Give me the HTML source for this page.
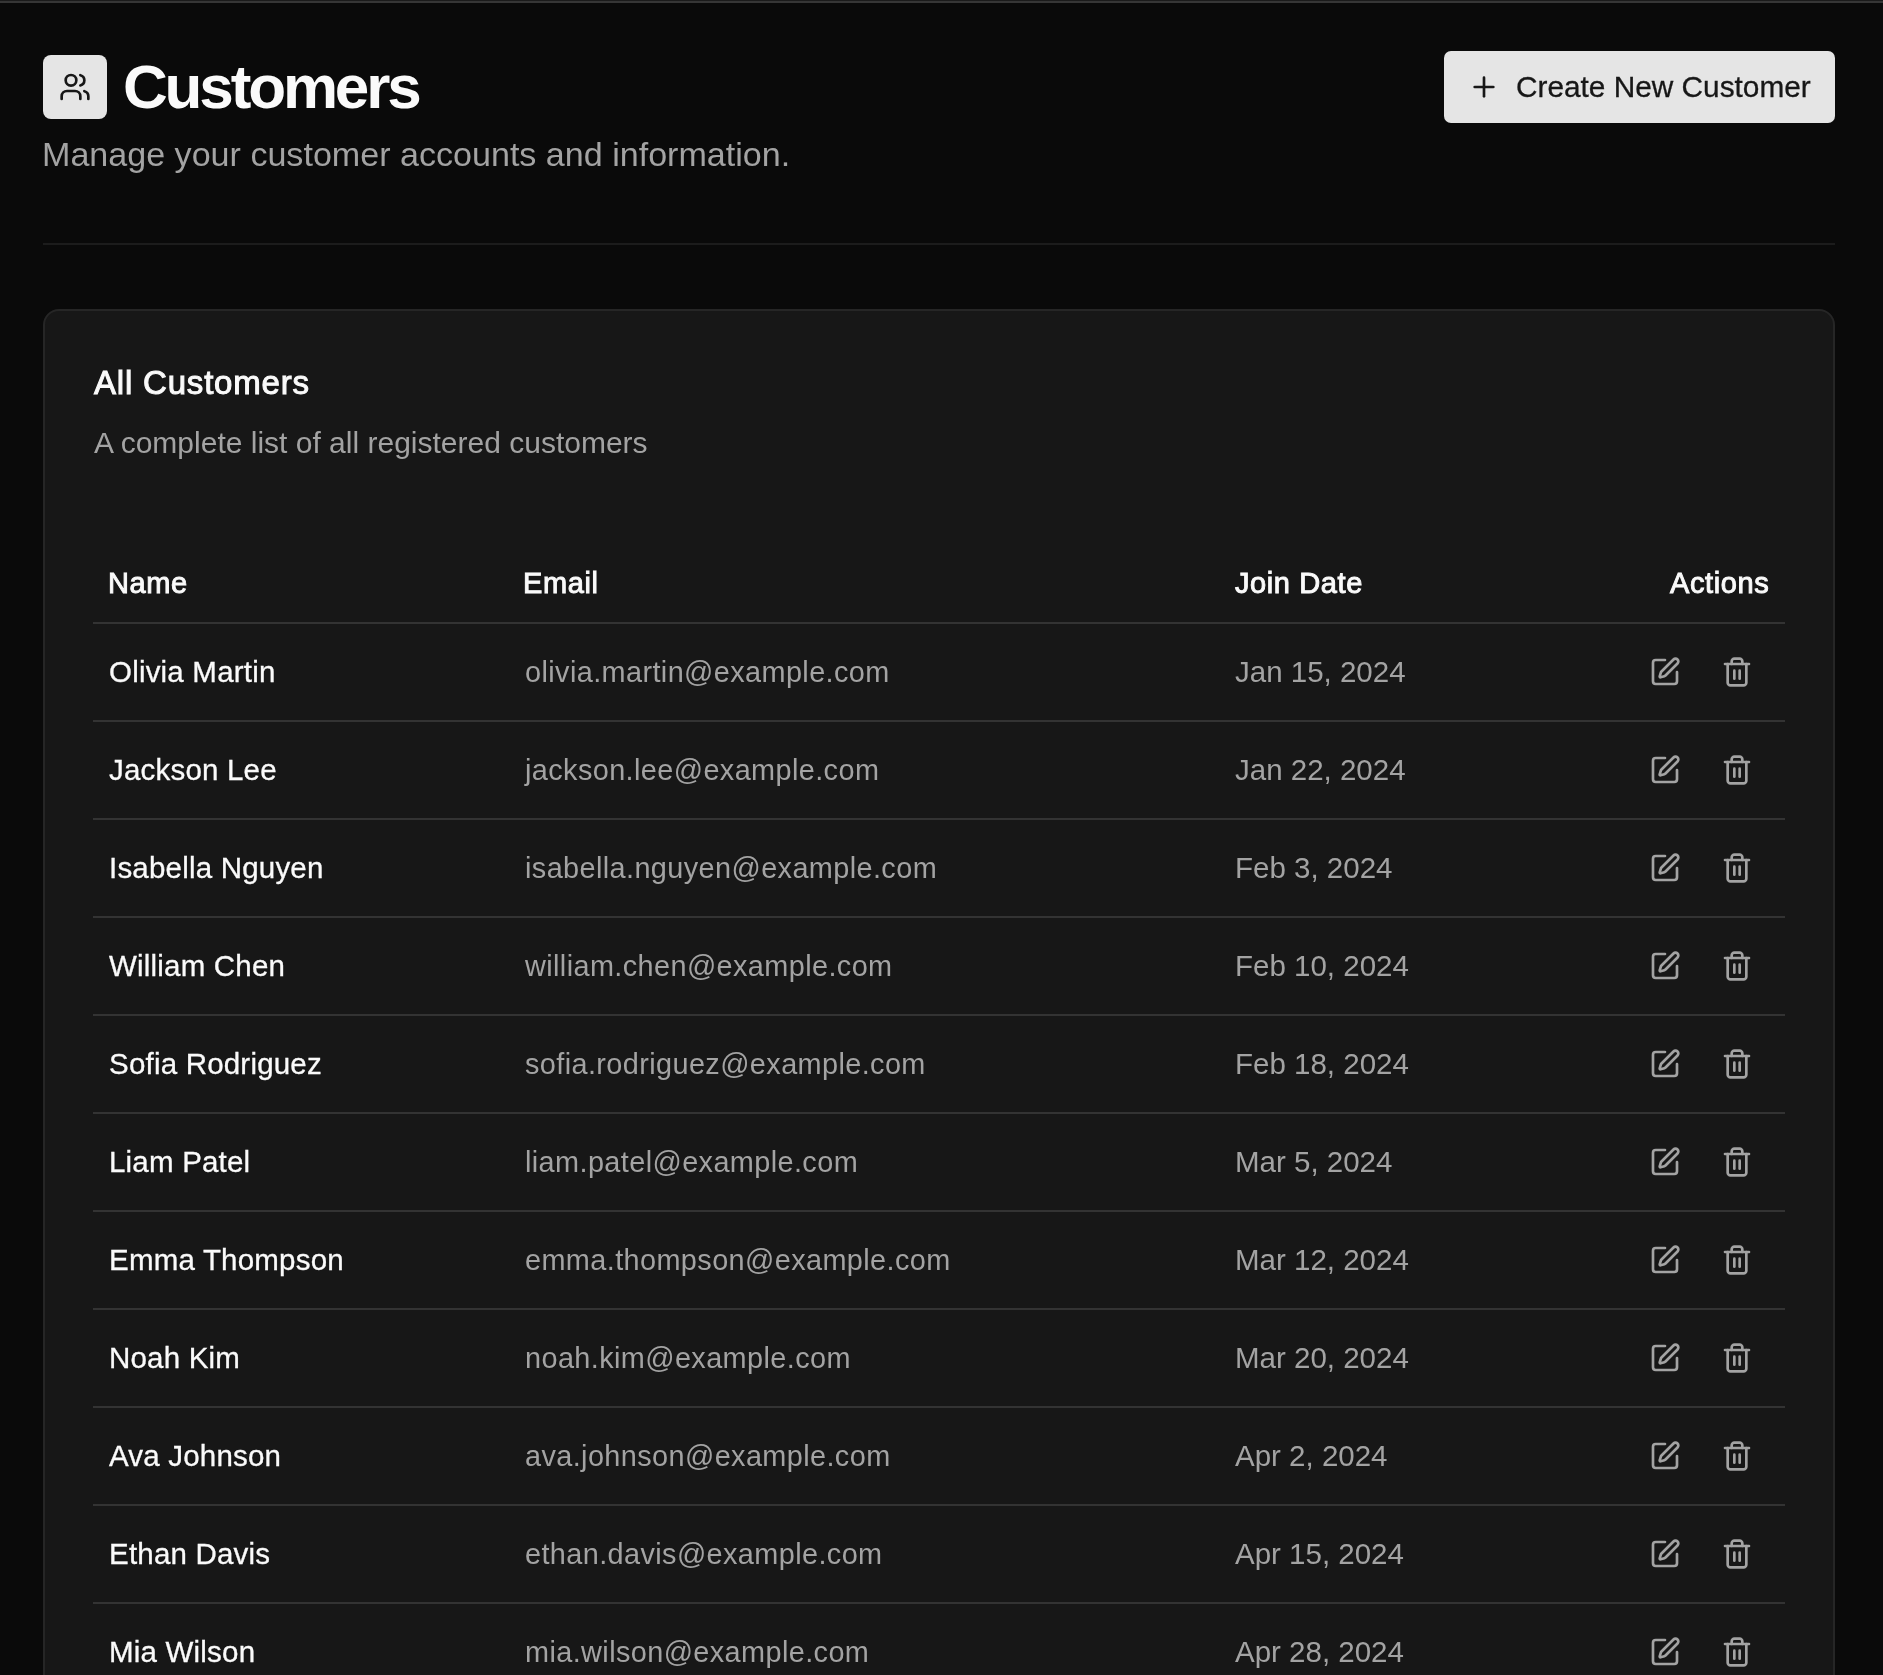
<!DOCTYPE html>
<html>
<head>
<meta charset="utf-8">
<title>Customers</title>
<style>
html,body{margin:0;padding:0;}
body{width:1883px;height:1675px;overflow:hidden;background:#0a0a0a;position:relative;font-family:"Liberation Sans",sans-serif;}
.topbar{position:absolute;left:0;top:0;width:1883px;height:3px;background:#363636;border-top:1px solid #1b1b1b;box-sizing:border-box;}
.t{position:absolute;white-space:nowrap;will-change:transform;}
.iconbox{position:absolute;left:43px;top:55px;width:64px;height:64px;background:#e5e5e5;border-radius:8px;}
.iconbox svg{position:absolute;left:16px;top:16px;}
.title{left:122.5px;top:56px;font-size:62px;line-height:62px;font-weight:700;color:#fafafa;letter-spacing:-3.15px;}
.sub{left:42px;top:137px;font-size:34.1px;line-height:34.1px;color:#a3a3a3;}
.btn{position:absolute;left:1444px;top:51px;width:391px;height:72px;background:#e5e5e5;border-radius:7px;}
.btntext{left:1516px;top:72px;font-size:29.8px;line-height:29.8px;color:#171717;-webkit-text-stroke:0.3px #171717;}
.sep{position:absolute;left:43px;top:243px;width:1792px;height:2px;background:#1c1c1c;}
.card{position:absolute;left:43px;top:309px;width:1792px;height:1500px;box-sizing:border-box;background:#171717;border:2px solid #262626;border-radius:16px;}
.ctitle{left:94px;top:365.5px;font-size:33px;line-height:33px;font-weight:400;-webkit-text-stroke:1.0px #fafafa;color:#fafafa;letter-spacing:0.8px;}
.cdesc{left:94px;top:427.5px;font-size:30px;line-height:30px;color:#a3a3a3;}
.th{font-size:29px;line-height:29px;font-weight:400;letter-spacing:0.6px;-webkit-text-stroke:0.95px #fafafa;color:#fafafa;top:568.5px;}
.dv{position:absolute;left:93px;width:1692px;height:2px;background:#333333;}
.nm{left:109px;font-size:29.5px;line-height:29.5px;letter-spacing:0.2px;color:#fafafa;-webkit-text-stroke:0.3px #fafafa;}
.em{left:525px;font-size:28.85px;line-height:28.85px;letter-spacing:0.4px;color:#a3a3a3;}
.dt{left:1235px;font-size:29.5px;line-height:29.5px;letter-spacing:0px;color:#a3a3a3;}
.ic{position:absolute;fill:none;stroke:#a3a3a3;stroke-width:2;stroke-linecap:round;stroke-linejoin:round;}
</style>
</head>
<body>
<div class="topbar"></div>
<div class="iconbox"><svg width="32" height="32" viewBox="0 0 24 24" fill="none" stroke="#171717" stroke-width="2" stroke-linecap="round" stroke-linejoin="round"><path d="M16 21v-2a4 4 0 0 0-4-4H6a4 4 0 0 0-4 4v2"/><circle cx="9" cy="7" r="4"/><path d="M22 21v-2a4 4 0 0 0-3-3.87"/><path d="M16 3.13a4 4 0 0 1 0 7.75"/></svg></div>
<div class="t title">Customers</div>
<div class="t sub">Manage your customer accounts and information.</div>
<div class="btn"></div>
<svg style="position:absolute;left:1468px;top:71px" width="32" height="32" viewBox="0 0 24 24" fill="none" stroke="#171717" stroke-width="2" stroke-linecap="round" stroke-linejoin="round"><path d="M5 12h14"/><path d="M12 5v14"/></svg>
<div class="t btntext">Create New Customer</div>
<div class="sep"></div>
<div class="card"></div>
<div class="t ctitle">All Customers</div>
<div class="t cdesc">A complete list of all registered customers</div>
<div class="t th" style="left:107.5px">Name</div>
<div class="t th" style="left:523px">Email</div>
<div class="t th" style="left:1235px">Join Date</div>
<div class="t th" style="right:114px">Actions</div>
<div class="dv" style="top:622px"></div>
<div class="t nm" style="top:657px">Olivia Martin</div>
<div class="t em" style="top:658px">olivia.martin@example.com</div>
<div class="t dt" style="top:657px">Jan 15, 2024</div>
<svg class="ic" style="left:1649px;top:656px" width="32" height="32" viewBox="0 0 24 24"><path d="M12 3H5a2 2 0 0 0-2 2v14a2 2 0 0 0 2 2h14a2 2 0 0 0 2-2v-7"/><path d="M18.375 2.625a1 1 0 0 1 3 3l-9.013 9.014a2 2 0 0 1-.853.505l-2.873.84a.5.5 0 0 1-.62-.62l.84-2.873a2 2 0 0 1 .506-.852z"/></svg>
<svg class="ic" style="left:1721px;top:656px" width="32" height="32" viewBox="0 0 24 24"><path d="M3 6h18"/><path d="M19 6v14c0 1-1 2-2 2H7c-1 0-2-1-2-2V6"/><path d="M8 6V4c0-1 1-2 2-2h4c1 0 2 1 2 2v2"/><path d="M10 11v6"/><path d="M14 11v6"/></svg>
<div class="dv" style="top:720px"></div>
<div class="t nm" style="top:755px">Jackson Lee</div>
<div class="t em" style="top:756px">jackson.lee@example.com</div>
<div class="t dt" style="top:755px">Jan 22, 2024</div>
<svg class="ic" style="left:1649px;top:754px" width="32" height="32" viewBox="0 0 24 24"><path d="M12 3H5a2 2 0 0 0-2 2v14a2 2 0 0 0 2 2h14a2 2 0 0 0 2-2v-7"/><path d="M18.375 2.625a1 1 0 0 1 3 3l-9.013 9.014a2 2 0 0 1-.853.505l-2.873.84a.5.5 0 0 1-.62-.62l.84-2.873a2 2 0 0 1 .506-.852z"/></svg>
<svg class="ic" style="left:1721px;top:754px" width="32" height="32" viewBox="0 0 24 24"><path d="M3 6h18"/><path d="M19 6v14c0 1-1 2-2 2H7c-1 0-2-1-2-2V6"/><path d="M8 6V4c0-1 1-2 2-2h4c1 0 2 1 2 2v2"/><path d="M10 11v6"/><path d="M14 11v6"/></svg>
<div class="dv" style="top:818px"></div>
<div class="t nm" style="top:853px">Isabella Nguyen</div>
<div class="t em" style="top:854px">isabella.nguyen@example.com</div>
<div class="t dt" style="top:853px">Feb 3, 2024</div>
<svg class="ic" style="left:1649px;top:852px" width="32" height="32" viewBox="0 0 24 24"><path d="M12 3H5a2 2 0 0 0-2 2v14a2 2 0 0 0 2 2h14a2 2 0 0 0 2-2v-7"/><path d="M18.375 2.625a1 1 0 0 1 3 3l-9.013 9.014a2 2 0 0 1-.853.505l-2.873.84a.5.5 0 0 1-.62-.62l.84-2.873a2 2 0 0 1 .506-.852z"/></svg>
<svg class="ic" style="left:1721px;top:852px" width="32" height="32" viewBox="0 0 24 24"><path d="M3 6h18"/><path d="M19 6v14c0 1-1 2-2 2H7c-1 0-2-1-2-2V6"/><path d="M8 6V4c0-1 1-2 2-2h4c1 0 2 1 2 2v2"/><path d="M10 11v6"/><path d="M14 11v6"/></svg>
<div class="dv" style="top:916px"></div>
<div class="t nm" style="top:951px">William Chen</div>
<div class="t em" style="top:952px">william.chen@example.com</div>
<div class="t dt" style="top:951px">Feb 10, 2024</div>
<svg class="ic" style="left:1649px;top:950px" width="32" height="32" viewBox="0 0 24 24"><path d="M12 3H5a2 2 0 0 0-2 2v14a2 2 0 0 0 2 2h14a2 2 0 0 0 2-2v-7"/><path d="M18.375 2.625a1 1 0 0 1 3 3l-9.013 9.014a2 2 0 0 1-.853.505l-2.873.84a.5.5 0 0 1-.62-.62l.84-2.873a2 2 0 0 1 .506-.852z"/></svg>
<svg class="ic" style="left:1721px;top:950px" width="32" height="32" viewBox="0 0 24 24"><path d="M3 6h18"/><path d="M19 6v14c0 1-1 2-2 2H7c-1 0-2-1-2-2V6"/><path d="M8 6V4c0-1 1-2 2-2h4c1 0 2 1 2 2v2"/><path d="M10 11v6"/><path d="M14 11v6"/></svg>
<div class="dv" style="top:1014px"></div>
<div class="t nm" style="top:1049px">Sofia Rodriguez</div>
<div class="t em" style="top:1050px">sofia.rodriguez@example.com</div>
<div class="t dt" style="top:1049px">Feb 18, 2024</div>
<svg class="ic" style="left:1649px;top:1048px" width="32" height="32" viewBox="0 0 24 24"><path d="M12 3H5a2 2 0 0 0-2 2v14a2 2 0 0 0 2 2h14a2 2 0 0 0 2-2v-7"/><path d="M18.375 2.625a1 1 0 0 1 3 3l-9.013 9.014a2 2 0 0 1-.853.505l-2.873.84a.5.5 0 0 1-.62-.62l.84-2.873a2 2 0 0 1 .506-.852z"/></svg>
<svg class="ic" style="left:1721px;top:1048px" width="32" height="32" viewBox="0 0 24 24"><path d="M3 6h18"/><path d="M19 6v14c0 1-1 2-2 2H7c-1 0-2-1-2-2V6"/><path d="M8 6V4c0-1 1-2 2-2h4c1 0 2 1 2 2v2"/><path d="M10 11v6"/><path d="M14 11v6"/></svg>
<div class="dv" style="top:1112px"></div>
<div class="t nm" style="top:1147px">Liam Patel</div>
<div class="t em" style="top:1148px">liam.patel@example.com</div>
<div class="t dt" style="top:1147px">Mar 5, 2024</div>
<svg class="ic" style="left:1649px;top:1146px" width="32" height="32" viewBox="0 0 24 24"><path d="M12 3H5a2 2 0 0 0-2 2v14a2 2 0 0 0 2 2h14a2 2 0 0 0 2-2v-7"/><path d="M18.375 2.625a1 1 0 0 1 3 3l-9.013 9.014a2 2 0 0 1-.853.505l-2.873.84a.5.5 0 0 1-.62-.62l.84-2.873a2 2 0 0 1 .506-.852z"/></svg>
<svg class="ic" style="left:1721px;top:1146px" width="32" height="32" viewBox="0 0 24 24"><path d="M3 6h18"/><path d="M19 6v14c0 1-1 2-2 2H7c-1 0-2-1-2-2V6"/><path d="M8 6V4c0-1 1-2 2-2h4c1 0 2 1 2 2v2"/><path d="M10 11v6"/><path d="M14 11v6"/></svg>
<div class="dv" style="top:1210px"></div>
<div class="t nm" style="top:1245px">Emma Thompson</div>
<div class="t em" style="top:1246px">emma.thompson@example.com</div>
<div class="t dt" style="top:1245px">Mar 12, 2024</div>
<svg class="ic" style="left:1649px;top:1244px" width="32" height="32" viewBox="0 0 24 24"><path d="M12 3H5a2 2 0 0 0-2 2v14a2 2 0 0 0 2 2h14a2 2 0 0 0 2-2v-7"/><path d="M18.375 2.625a1 1 0 0 1 3 3l-9.013 9.014a2 2 0 0 1-.853.505l-2.873.84a.5.5 0 0 1-.62-.62l.84-2.873a2 2 0 0 1 .506-.852z"/></svg>
<svg class="ic" style="left:1721px;top:1244px" width="32" height="32" viewBox="0 0 24 24"><path d="M3 6h18"/><path d="M19 6v14c0 1-1 2-2 2H7c-1 0-2-1-2-2V6"/><path d="M8 6V4c0-1 1-2 2-2h4c1 0 2 1 2 2v2"/><path d="M10 11v6"/><path d="M14 11v6"/></svg>
<div class="dv" style="top:1308px"></div>
<div class="t nm" style="top:1343px">Noah Kim</div>
<div class="t em" style="top:1344px">noah.kim@example.com</div>
<div class="t dt" style="top:1343px">Mar 20, 2024</div>
<svg class="ic" style="left:1649px;top:1342px" width="32" height="32" viewBox="0 0 24 24"><path d="M12 3H5a2 2 0 0 0-2 2v14a2 2 0 0 0 2 2h14a2 2 0 0 0 2-2v-7"/><path d="M18.375 2.625a1 1 0 0 1 3 3l-9.013 9.014a2 2 0 0 1-.853.505l-2.873.84a.5.5 0 0 1-.62-.62l.84-2.873a2 2 0 0 1 .506-.852z"/></svg>
<svg class="ic" style="left:1721px;top:1342px" width="32" height="32" viewBox="0 0 24 24"><path d="M3 6h18"/><path d="M19 6v14c0 1-1 2-2 2H7c-1 0-2-1-2-2V6"/><path d="M8 6V4c0-1 1-2 2-2h4c1 0 2 1 2 2v2"/><path d="M10 11v6"/><path d="M14 11v6"/></svg>
<div class="dv" style="top:1406px"></div>
<div class="t nm" style="top:1441px">Ava Johnson</div>
<div class="t em" style="top:1442px">ava.johnson@example.com</div>
<div class="t dt" style="top:1441px">Apr 2, 2024</div>
<svg class="ic" style="left:1649px;top:1440px" width="32" height="32" viewBox="0 0 24 24"><path d="M12 3H5a2 2 0 0 0-2 2v14a2 2 0 0 0 2 2h14a2 2 0 0 0 2-2v-7"/><path d="M18.375 2.625a1 1 0 0 1 3 3l-9.013 9.014a2 2 0 0 1-.853.505l-2.873.84a.5.5 0 0 1-.62-.62l.84-2.873a2 2 0 0 1 .506-.852z"/></svg>
<svg class="ic" style="left:1721px;top:1440px" width="32" height="32" viewBox="0 0 24 24"><path d="M3 6h18"/><path d="M19 6v14c0 1-1 2-2 2H7c-1 0-2-1-2-2V6"/><path d="M8 6V4c0-1 1-2 2-2h4c1 0 2 1 2 2v2"/><path d="M10 11v6"/><path d="M14 11v6"/></svg>
<div class="dv" style="top:1504px"></div>
<div class="t nm" style="top:1539px">Ethan Davis</div>
<div class="t em" style="top:1540px">ethan.davis@example.com</div>
<div class="t dt" style="top:1539px">Apr 15, 2024</div>
<svg class="ic" style="left:1649px;top:1538px" width="32" height="32" viewBox="0 0 24 24"><path d="M12 3H5a2 2 0 0 0-2 2v14a2 2 0 0 0 2 2h14a2 2 0 0 0 2-2v-7"/><path d="M18.375 2.625a1 1 0 0 1 3 3l-9.013 9.014a2 2 0 0 1-.853.505l-2.873.84a.5.5 0 0 1-.62-.62l.84-2.873a2 2 0 0 1 .506-.852z"/></svg>
<svg class="ic" style="left:1721px;top:1538px" width="32" height="32" viewBox="0 0 24 24"><path d="M3 6h18"/><path d="M19 6v14c0 1-1 2-2 2H7c-1 0-2-1-2-2V6"/><path d="M8 6V4c0-1 1-2 2-2h4c1 0 2 1 2 2v2"/><path d="M10 11v6"/><path d="M14 11v6"/></svg>
<div class="dv" style="top:1602px"></div>
<div class="t nm" style="top:1637px">Mia Wilson</div>
<div class="t em" style="top:1638px">mia.wilson@example.com</div>
<div class="t dt" style="top:1637px">Apr 28, 2024</div>
<svg class="ic" style="left:1649px;top:1636px" width="32" height="32" viewBox="0 0 24 24"><path d="M12 3H5a2 2 0 0 0-2 2v14a2 2 0 0 0 2 2h14a2 2 0 0 0 2-2v-7"/><path d="M18.375 2.625a1 1 0 0 1 3 3l-9.013 9.014a2 2 0 0 1-.853.505l-2.873.84a.5.5 0 0 1-.62-.62l.84-2.873a2 2 0 0 1 .506-.852z"/></svg>
<svg class="ic" style="left:1721px;top:1636px" width="32" height="32" viewBox="0 0 24 24"><path d="M3 6h18"/><path d="M19 6v14c0 1-1 2-2 2H7c-1 0-2-1-2-2V6"/><path d="M8 6V4c0-1 1-2 2-2h4c1 0 2 1 2 2v2"/><path d="M10 11v6"/><path d="M14 11v6"/></svg>
<div class="dv" style="top:1700px"></div>
</body>
</html>
